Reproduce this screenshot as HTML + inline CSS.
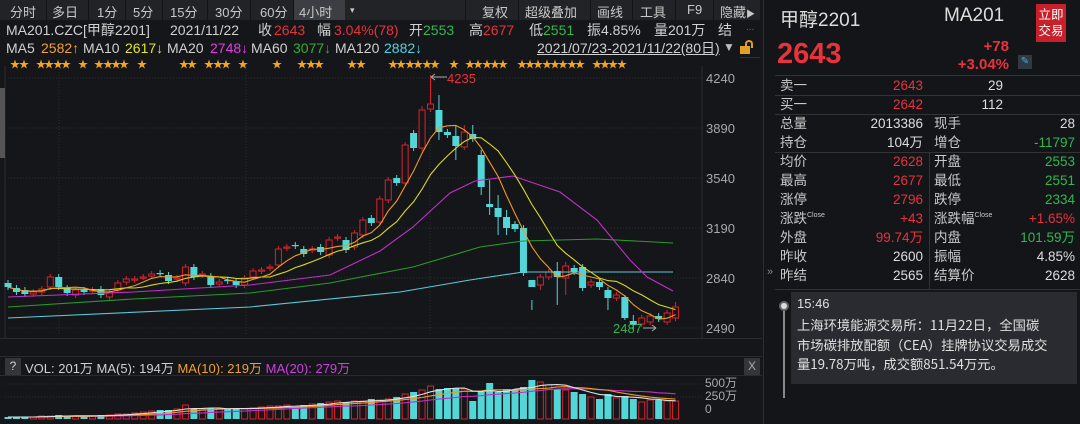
<!DOCTYPE html>
<html><head><meta charset="utf-8">
<style>
*{margin:0;padding:0;box-sizing:border-box}
body{width:1080px;height:424px;background:#15161a;overflow:hidden;position:relative;font-family:"Liberation Sans","Noto Sans CJK SC",sans-serif;color:#d0d0d0}
.a{position:absolute;white-space:nowrap}
.r{color:#e8323c}.g{color:#2fb84e}
.tb{position:absolute;left:0;top:0;width:760px;height:20px;background:#222327;font-size:13px}
.tb span{position:absolute;top:2px;color:#c8c8c8}
.sep{position:absolute;top:0;width:1px;height:20px;background:#131417}
.q{position:absolute;font-size:14px;line-height:16px;white-space:nowrap}
.rp{position:absolute;left:763px;top:0;width:317px;height:424px;background:#141519}
.t{position:absolute;font-size:13.5px;line-height:16px;color:#c8c8c8;white-space:nowrap}
.t sup{font-size:7px;line-height:0;vertical-align:6px}
.v{position:absolute;font-size:13.5px;line-height:16px;text-align:right}
</style></head><body>
<div class="tb">
<div style="position:absolute;left:293px;top:0;width:52px;height:20px;background:#3d3e43"></div>
<span style="left:10px">分时</span><div class="sep" style="left:46px"></div>
<span style="left:52px">多日</span><div class="sep" style="left:88px"></div>
<span style="left:97px">1分</span><div class="sep" style="left:125px"></div>
<span style="left:133px">5分</span><div class="sep" style="left:162px"></div>
<span style="left:170px">15分</span><div class="sep" style="left:207px"></div>
<span style="left:215px">30分</span><div class="sep" style="left:250px"></div>
<span style="left:260px">60分</span><div class="sep" style="left:293px"></div>
<span style="left:299px">4小时</span>
<span style="left:350px;font-size:9px;top:5px">▾</span>
<div class="sep" style="left:465px"></div>
<span style="left:482px">复权</span><div class="sep" style="left:518px"></div>
<span style="left:525px">超级叠加</span><div class="sep" style="left:590px"></div>
<span style="left:597px">画线</span><div class="sep" style="left:632px"></div>
<span style="left:640px">工具</span><div class="sep" style="left:675px"></div>
<span style="left:687px">F9</span><div class="sep" style="left:713px"></div>
<span style="left:720px">隐藏<span style="position:static;font-size:9px">▶</span></span>
</div>
<div class="q" style="left:6px;top:22px">MA201.CZC[甲醇2201]</div>
<div class="q" style="left:170px;top:22px">2021/11/22</div>
<div class="q" style="left:258px;top:22px">收</div><div class="q r" style="left:274px;top:22px">2643</div>
<div class="q" style="left:317px;top:22px">幅</div><div class="q r" style="left:334px;top:22px">3.04%(78)</div>
<div class="q" style="left:409px;top:22px">开</div><div class="q g" style="left:423px;top:22px">2553</div>
<div class="q" style="left:469px;top:22px">高</div><div class="q r" style="left:483px;top:22px">2677</div>
<div class="q" style="left:529px;top:22px">低</div><div class="q g" style="left:543px;top:22px">2551</div>
<div class="q" style="left:587px;top:22px">振4.85%</div>
<div class="q" style="left:654px;top:22px">量201万</div>
<div class="q" style="left:718px;top:22px">结</div>
<div class="a r" style="left:746px;top:22px;font-size:10px">...</div>
<div class="q" style="left:6px;top:40px">MA5</div><div class="q" style="left:41px;top:40px;color:#f0a030">2582↑</div>
<div class="q" style="left:83px;top:40px">MA10</div><div class="q" style="left:125px;top:40px;color:#e4e42a">2617↓</div>
<div class="q" style="left:167px;top:40px">MA20</div><div class="q" style="left:210px;top:40px;color:#e040e0">2748↓</div>
<div class="q" style="left:251px;top:40px">MA60</div><div class="q" style="left:293px;top:40px;color:#2fb02f">3077↓</div>
<div class="q" style="left:335px;top:40px">MA120</div><div class="q" style="left:384px;top:40px;color:#52d2e0">2882↓</div>
<div class="q" style="left:537px;top:40px;text-decoration:underline">2021/07/23-2021/11/22(80日)</div>
<div class="a" style="left:723px;top:40px;font-size:12px;color:#bbb">▼</div>
<div class="a" style="left:740px;top:46px;width:10px;height:8px;background:#e0a020"></div>
<div class="a" style="left:745px;top:40px;width:8px;height:8px;border:2px solid #e0a020;border-bottom:none;border-radius:4px 4px 0 0"></div>
<div class="a" style="left:740px;top:57px;width:20px;height:1px;background:#333"></div>

<svg class="a" style="left:0;top:0" width="762" height="424" id="ch"></svg>

<div class="a" style="left:0;top:338px;width:762px;height:1px;background:#2a2b30"></div>
<div class="a" style="left:0;top:356px;width:762px;height:1px;background:#2a2b30"></div>
<div class="a" style="left:5px;top:358px;width:16px;height:17px;background:#34353a;color:#ccc;font-size:12px;text-align:center;line-height:17px">?</div>
<div class="a" style="left:25px;top:358px;font-size:13px">VOL: 201万 MA(5): 194万 <span style="color:#f0a030">MA(10): 219万</span> <span style="color:#d040e0">MA(20): 279万</span></div>
<div class="a" style="left:744px;top:358px;width:16px;height:17px;background:#34353a;color:#aaa;font-size:12px;text-align:center;line-height:17px">X</div>
<div class="a" style="left:0;top:375px;width:762px;height:1px;background:#2a2b30"></div>
<div class="a" style="left:705px;top:377px;font-size:12px;color:#aaa;line-height:13px">500万<br>250万<br>0</div>
<div class="a" style="left:0;top:88px;width:5px;height:70px;background:#555"></div>

<div class="rp">
<div class="a" style="left:0;top:0;width:1px;height:424px;background:#2c2d31"></div>
<div class="a" style="left:17px;top:5px;font-size:19px;color:#ddd">甲醇2201</div>
<div class="a" style="left:181px;top:5px;font-size:19px;color:#ddd">MA201</div>
<div class="a" style="left:273px;top:4px;width:30px;height:38px;background:#c8202a;color:#fff;font-size:12.5px;line-height:16px;text-align:center;padding-top:3px">立即<br>交易</div>
<div class="a" style="left:14px;top:38px;font-size:29px;font-weight:bold;color:#e8323c">2643</div>
<div class="a r" style="left:140px;top:38px;width:106px;text-align:right;font-size:15px;font-weight:bold;line-height:18px">+78<br>+3.04%</div>
<div class="a" style="left:255px;top:55px;width:14px;height:14px;background:#2f3a44;color:#4ad;font-size:10px;text-align:center;line-height:14px">✎</div>
<div class="a" style="left:12px;top:75px;width:305px;height:1px;background:#333"></div>
<div class="a" style="left:12px;top:95px;width:305px;height:1px;background:#333"></div>
<div class="a" style="left:12px;top:114px;width:305px;height:1px;background:#333"></div>
<div class="a" style="left:12px;top:152px;width:305px;height:1px;background:#333"></div>
<div class="a" style="left:166px;top:152px;width:1px;height:137px;background:#333"></div>
<div class="a" style="left:12px;top:289px;width:305px;height:1px;background:#333"></div>
<div class="a" style="left:4px;top:266px;font-size:11px;color:#888">»</div>
<div id="tbl"></div>
<div class="a" style="left:28px;top:292px;width:286px;height:92px;background:#2a2b30"></div>
<div class="a" style="left:20px;top:305px;width:2px;height:93px;background:#888"></div>
<div class="a" style="left:16px;top:301px;width:10px;height:10px;border-radius:5px;background:#ddd;border:2px solid #666"></div>
<div class="a" style="left:34px;top:296px;font-size:13px;color:#e0e0e0">15:46</div>
<div class="a" style="left:34px;top:315px;font-size:13.3px;color:#e0e0e0;line-height:19.5px;white-space:normal;width:262px;font-family:'Noto Sans CJK SC','Liberation Sans',sans-serif">上海环境能源交易所：11月22日，全国碳<br>市场碳排放配额（CEA）挂牌协议交易成交<br>量19.78万吨，成交额851.54万元。</div>
</div>

<script>
var tb=document.getElementById('tbl'),h='';
h+='<div class="t" style="left:17px;top:78px">卖一</div><div class="v r" style="left:80px;top:78px;width:80px">2643</div><div class="v" style="left:160px;top:78px;width:80px;color:#ddd">29</div>';
h+='<div class="t" style="left:17px;top:97px">买一</div><div class="v r" style="left:80px;top:97px;width:80px">2642</div><div class="v" style="left:160px;top:97px;width:80px;color:#ddd">112</div>';
var R=[["总量","2013386","w","现手","28","w"],["持仓","104万","w","增仓","-11797","g"],["均价","2628","r","开盘","2553","g"],["最高","2677","r","最低","2551","g"],["涨停","2796","r","跌停","2334","g"],["涨跌<sup>Close</sup>","+43","r","涨跌幅<sup>Close</sup>","+1.65%","r"],["外盘","99.74万","r","内盘","101.59万","g"],["昨收","2600","w","振幅","4.85%","w"],["昨结","2565","w","结算价","2628","w"]];
function c(k){return k=='r'?'#e8323c':k=='g'?'#2fb84e':'#ddd'}
R.forEach(function(r,i){var y=116+i*19;
h+='<div class="t" style="left:17px;top:'+y+'px">'+r[0]+'</div><div class="v" style="left:60px;top:'+y+'px;width:100px;color:'+c(r[2])+'">'+r[1]+'</div>';
h+='<div class="t" style="left:171px;top:'+y+'px">'+r[3]+'</div><div class="v" style="left:210px;top:'+y+'px;width:102px;color:'+c(r[5])+'">'+r[4]+'</div>';});
tb.innerHTML=h;

var s='';
var lv=[[78,'4240'],[128,'3890'],[178,'3540'],[228,'3190'],[278,'2840'],[328,'2490']];
lv.forEach(function(l){s+='<line x1="5" y1="'+l[0]+'" x2="702" y2="'+l[0]+'" stroke="#2c2d33" stroke-dasharray="1,2"/>';s+='<text x="706" y="'+(l[0]+5)+'" fill="#a8a8a8" font-size="13" font-family="Liberation Sans">'+l[1]+'</text>';});
[59,246,430].forEach(function(x){s+='<line x1="'+x+'" y1="66" x2="'+x+'" y2="335" stroke="#2c2d33" stroke-dasharray="1,2"/>';});
s+='<line x1="702" y1="66" x2="702" y2="338" stroke="#2a2b30"/>';
s+='<line x1="5" y1="66" x2="5" y2="338" stroke="#2a2b30"/>';
[15,24,41,49,58,66,83,99,108,116,124,142,184,192,209,218,226,243,277,302,311,319,352,361,393,401,410,418,427,435,454,470,478,487,495,503,522,530,538,547,555,563,572,580,597,605,613,622].forEach(function(x){s+='<text x="'+(x-5)+'" y="68" fill="#f2a624" font-size="10">★</text>';});
var C=[[283,287,0],[288,292,0],[290,294,0],[294,292,1],[292,289,1],[287,277,1],[277,287,0],[288,293,0],[295,290,1],[290,292,0],
[291,290,1],[289,295,0],[297,292,1],[290,283,1],[282,279,1],[280,279,1],[277,277,1],[276,274,1],[273,274,0],[275,281,0],
[279,278,1],[283,267,1],[267,277,0],[275,274,1],[276,285,0],[284,282,1],[280,281,0],[281,285,0],[285,278,1],[277,271,1],
[271,270,1],[268,267,1],[265,249,1],[248,247,1],[245,246,0],[249,254,0],[250,249,1],[247,252,0],[255,240,1],[238,237,1],
[240,250,0],[247,233,1],[235,220,1],[218,223,0],[222,199,1],[200,180,1],[178,183,0],[183,145,1],[133,148,0],[148,110,1],
[109,104,1],[110,132,0],[132,135,0],[136,146,0],[147,132,1],[134,139,0],[155,187,0],[204,207,0],[208,217,0],[217,228,0],
[224,229,0],[228,273,0],[280,287,0],[285,277,1],[277,272,1],[271,277,0],[278,266,1],[268,272,0],[267,288,0],[285,282,1],
[282,287,0],[290,298,0],[298,295,1],[297,318,0],[321,325,0],[324,318,1],[322,316,1],[316,319,0],[322,313,1],[318,307,1]];
var X=function(i){return 8+i*8.45};
var hi={50:75,51:95,47:142,49:106,56:150,57:180,58:195,59:210,61:225,62:300,65:262,66:262,73:295,74:315,76:313,79:302,53:125,54:125,55:125};
var lo={51:140,53:160,56:195,57:215,58:235,59:235,62:310,63:290,65:305,66:295,71:310,74:330,73:320};
var cl=[];
C.forEach(function(k,i){var x=X(i),t=Math.min(k[0],k[1]),b=Math.max(k[0],k[1]);cl.push(k[1]);
var H=hi[i]||t-3,L=lo[i]||b+3;
var col=k[2]?'#d8222c':'#52d6d8';
s+='<line x1="'+x+'" y1="'+H+'" x2="'+x+'" y2="'+L+'" stroke="'+col+'" stroke-width="1"/>';
var bh=Math.max(b-t,1.2);
if(k[2])s+='<rect x="'+(x-3)+'" y="'+t+'" width="6" height="'+bh+'" fill="#15161a" stroke="'+col+'" stroke-width="1"/>';
else s+='<rect x="'+(x-3.5)+'" y="'+t+'" width="7" height="'+bh+'" fill="'+col+'"/>';});
function ma(a,n){var r=[];for(var i=0;i<a.length;i++){var sm=0,m=0;for(var j=Math.max(0,i-n+1);j<=i;j++){sm+=a[j];m++}r.push(sm/m)}return r}
function pl(pts,col){return '<polyline fill="none" stroke="'+col+'" stroke-width="1.1" points="'+pts.map(function(p){return p[0]+','+p[1]}).join(' ')+'"/>'}
var m5=ma(cl,5),m10=ma(cl,10);
s+=pl([[8,318],[250,307],[400,292],[470,280],[523,272],[673,272]],'#5cc8d8');
s+=pl([[8,307],[133,299],[250,293],[330,283],[413,267],[480,247],[523,241],[597,239],[673,243]],'#2a9a2a');
s+=pl([[8,297],[133,292],[250,285],[330,275],[380,251],[413,227],[450,193],[475,181],[513,176],[560,192],[597,220],[630,260],[647,277],[673,291]],'#c030c8');
s+=pl(m10.map(function(v,i){return [X(i),v.toFixed(1)]}),'#d8d820');
s+=pl(m5.map(function(v,i){return [X(i),v.toFixed(1)]}),'#f09a20');
s+='<text x="447" y="83" fill="#e8323c" font-size="13">4235</text><path d="M447 77 H431 M431 77 l4 -3 M431 77 l4 3" stroke="#aaa" fill="none"/>';
s+='<text x="613" y="333" fill="#2fb84e" font-size="13">2487</text><path d="M643 328 H656 M656 328 l-4 -3 M656 328 l-4 3" stroke="#aaa" fill="none"/>';
var V=[2,2,2,2,3,3,4,3,3,3,3,4,4,5,5,6,7,8,9,9,10,14,10,10,11,10,10,11,10,11,12,13,13,14,12,14,15,16,17,18,17,18,18,20,19,20,22,25,27,29,33,30,31,31,30,18,27,36,27,30,29,32,39,37,34,30,29,27,25,22,20,25,21,23,20,17,19,19,18,18];
[384,397].forEach(function(y){s+='<line x1="5" y1="'+y+'" x2="702" y2="'+y+'" stroke="#2c2d33" stroke-dasharray="1,2"/>'});
V.forEach(function(v,i){var x=X(i),col=C[i][2]?'#d8222c':'#52d6d8';
if(C[i][2])s+='<rect x="'+(x-3)+'" y="'+(419-v)+'" width="6" height="'+v+'" fill="none" stroke="'+col+'"/>';
else s+='<rect x="'+(x-3.5)+'" y="'+(419-v)+'" width="7" height="'+v+'" fill="'+col+'"/>';});
var vm5=ma(V,5),vm10=ma(V,10),vm20=ma(V,20);
s+=pl(vm20.map(function(v,i){return [X(i),(419-v).toFixed(1)]}),'#c030c8');
s+=pl(vm10.map(function(v,i){return [X(i),(419-v).toFixed(1)]}),'#f09a20');
s+=pl(vm5.map(function(v,i){return [X(i),(419-v).toFixed(1)]}),'#e0e0e0');
document.getElementById('ch').innerHTML=s;
</script>
</body></html>
